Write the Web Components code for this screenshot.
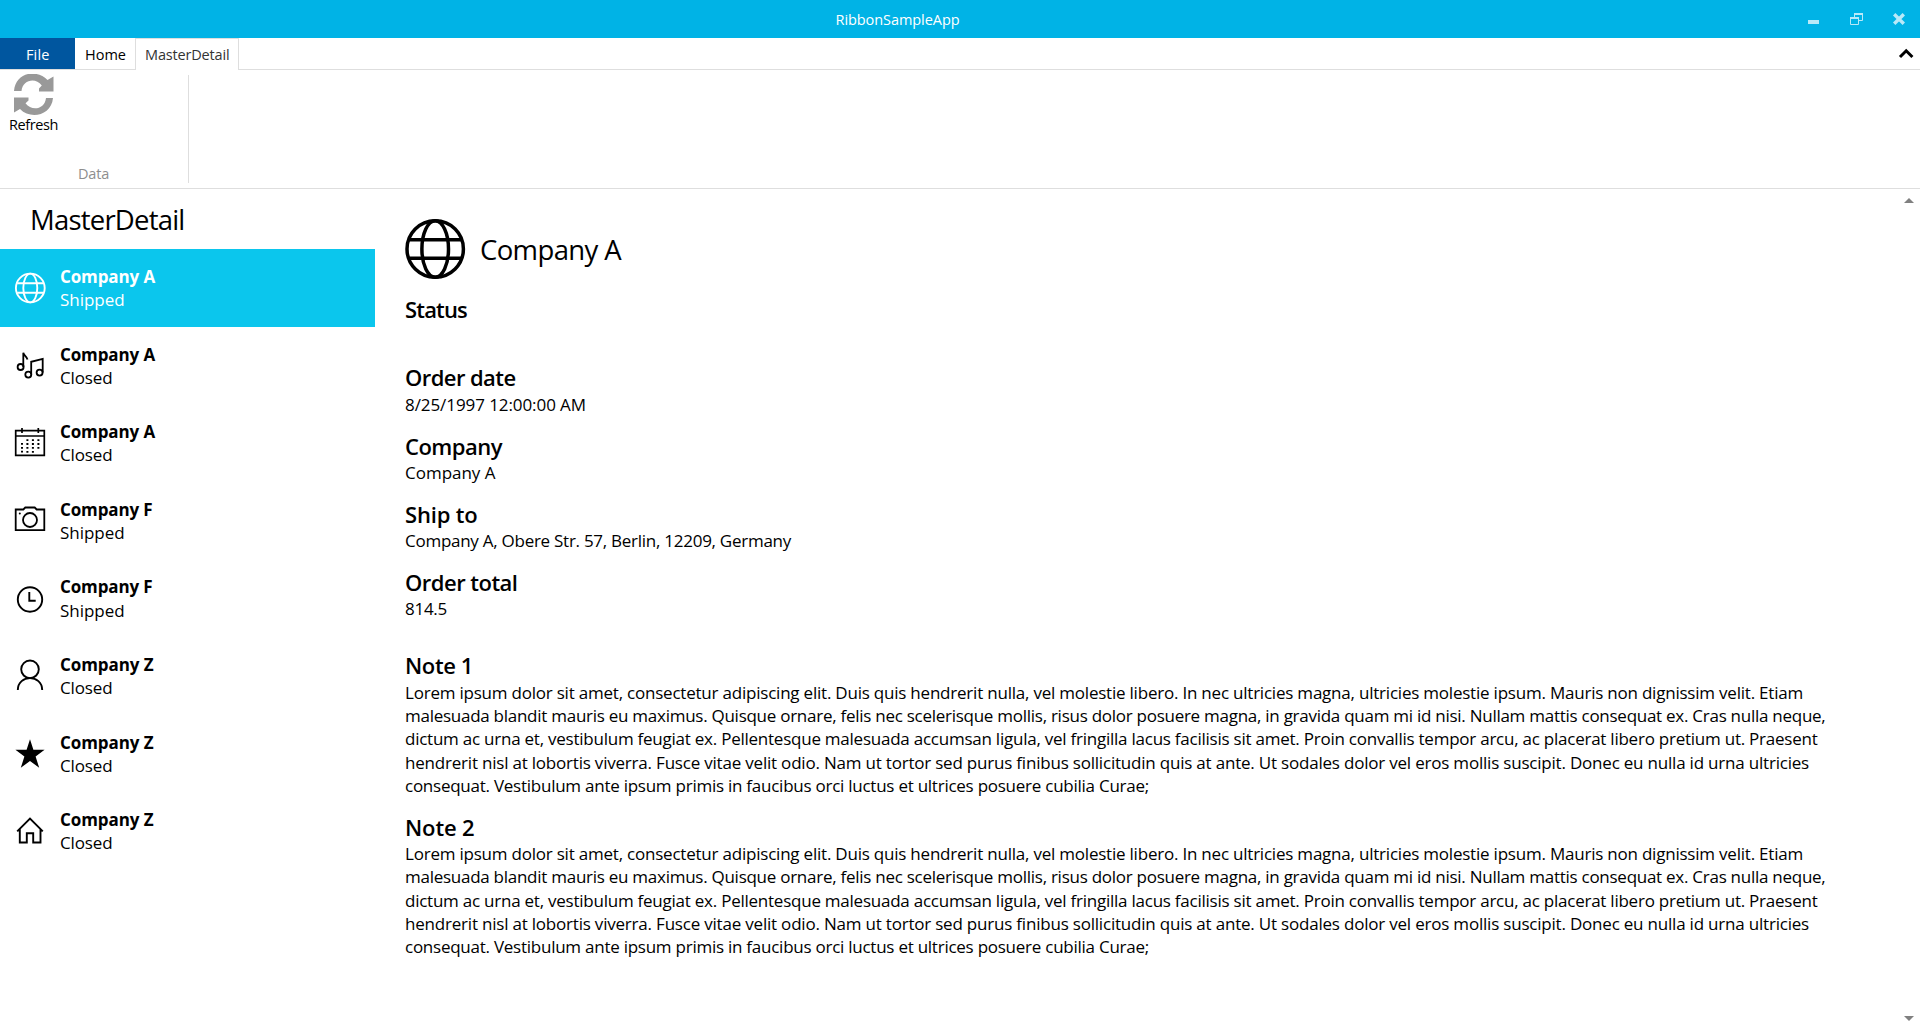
<!DOCTYPE html>
<html lang="en">
<head>
<meta charset="utf-8">
<title>RibbonSampleApp</title>
<style>
html,body{margin:0;height:100%;background:#fff;overflow:hidden}
body{font-family:"Open Sans","Noto Sans",sans-serif;font-size:17px;color:#000}
</style>
</head>
<body>
<app-window></app-window>
<script>
const define = (name, html, init) => customElements.define(name, class extends HTMLElement {
  constructor() {
    super();
    this.attachShadow({mode: 'open'}).innerHTML = html;
  }
  connectedCallback() { if (init) init(this, this.shadowRoot); }
});

// One line of text, tracked so that it fills the width given in "w".
customElements.define('fit-text', class extends HTMLElement {
  constructor() {
    super();
    this.attachShadow({mode: 'open'}).innerHTML =
      '<style>:host{display:block;white-space:pre;line-height:23.27px}span{display:inline-block;line-height:inherit;vertical-align:top}</style><span></span>';
  }
  connectedCallback() {
    const s = this.shadowRoot.querySelector('span');
    s.textContent = this.getAttribute('t');
    const w = parseFloat(this.getAttribute('w'));
    const n = s.textContent.length;
    s.style.letterSpacing = '0px';
    s.style.letterSpacing = ((w - s.getBoundingClientRect().width) / n) + 'px';
  }
});

const ICONS = {
  globe: '<circle cx="30.3" cy="39" r="14.4"/><ellipse cx="30.3" cy="39" rx="7" ry="14.4"/><path d="M17.2 34.3h26.2M17.2 43.7h26.2"/>',
  music: '<g stroke-width="1.8"><circle cx="20.6" cy="40" r="3"/><path d="M23.3 40V25.7c.5 3 3.4 3.2 4.2 6.8"/><circle cx="28.3" cy="47.6" r="3"/><circle cx="39.6" cy="45.6" r="3"/><path d="M31.200 47.6V34.8L42.7 32v13.6"/></g>',
  calendar: '<g stroke-width="1.7"><path d="M15.7 26.7h28.6v24.6H15.7zM15.7 32h28.6M22 24v5M38.3 24v5"/><path stroke-width="2" stroke-dasharray="1.8 2.1" d="M22 39v10.6M27.4 35.2v14.4M32.9 35.2v14.4M38.4 35.2v10.6"/></g>',
  camera: '<g stroke-width="1.8"><path d="M15.7 27.5h7.6l2-2h9.4l2 2h7.6v20.7H15.7z"/><circle cx="30" cy="38" r="7"/></g><circle cx="19.8" cy="31.5" r="1" fill="currentColor" stroke="none"/>',
  clock: '<circle cx="30" cy="40.5" r="12.2"/><path d="M29.3 33v8.7h6.4"/>',
  person: '<circle cx="30" cy="32.3" r="8.8"/><path d="M17.8 53c0-15.8 24.4-15.8 24.4 0"/>',
  star: '<path fill="currentColor" stroke="none" d="M30 24.3l3.4 10.4h11.2l-9 6.9 3.6 11.2L30 46l-9.2 6.8 3.6-11.2-9-6.9h11.2z"/>',
  house: '<path d="M17.2 39.3L30 26.5l12.8 12.8M19.8 37v13.5h7V41.3h6.4v9.2h7.3V37"/>'
};

define('title-bar', `<style>
:host{display:flex;height:38px;background:#00b3e6;color:#fff;font-size:14.500px}
fit-text{padding:8px 0 0 835.500px}
.b{display:flex;flex:1;justify-content:flex-end}
</style>
<fit-text t="RibbonSampleApp" w="124"></fit-text>
<div class="b"><svg width="128" height="38" fill="none" stroke="#b9e9f8"><path stroke="none" fill="#b9e9f8" d="M16 20h11v4H16z"/><path d="M62.5 17.5V15M62.5 14v3.5M66.5 20.5h4v-6.5M62 14h9" stroke-width="1"/><path stroke-width="2" d="M62 14h9M58 18h9"/><path d="M58.5 17v7.500h8V17"/><path stroke-width="3.400" d="M102.200 14.200l9.600 9.600M111.800 14.200l-9.600 9.600"/></svg></div>`);

define('ribbon-tabs', `<style>
:host{display:flex;height:32px;font-size:14.500px}
div{box-sizing:border-box;height:32px;border-bottom:1px solid #dedede;padding-top:5px}
.f{width:75px;background:linear-gradient(#00569f,#00569f) content-box;color:#fff;padding:0}
.f fit-text{padding:5px 0 3px 26px}
.h{width:60px;padding-left:10px}
.m{width:104px;border:1px solid #dedede;border-bottom:0;padding:4px 0 0 9px;color:#333}
.r{flex:1;display:flex;justify-content:flex-end;padding:0}
</style>
<div class="f"><fit-text t="File" w="23.500"></fit-text></div>
<div class="h"><fit-text t="Home" w="41"></fit-text></div>
<div class="m"><fit-text t="MasterDetail" w="84.500"></fit-text></div>
<div class="r"><svg width="30" height="30" fill="none" stroke="#000" stroke-width="3"><path d="M10 19l6.200-6.200 6.200 6.200"/></svg></div>`);

define('ribbon-group', `<style>
:host{display:flex;height:118px;border-bottom:1px solid #dedede;font-size:14.500px}
section{display:flex;flex-direction:column;justify-content:space-between;width:188px;height:108px;margin-top:5px;border-right:1px solid #dedede}
svg{display:block;margin:-1px 0 0 13px}
.b fit-text{margin:-3px 0 0 9px}
.l{color:#8e8e8e;margin:0 0 -2px 78px}
</style>
<section><div class="b"><svg width="42" height="42" viewBox="0 0.500 42 42" fill="#999"><path d="M1 17.500C2.500-1 23-5 34.500 6.500L40.500 3V18H26v-3l2.800-3C22 3 9.500 7 8.500 17.500z"/><path d="M40 24.500C38.500 42 17.500 46.500 7 35.500L1 39V24h14.500v3l-3 2.800C19 38.500 32 35.500 33 24.500z"/></svg>
<fit-text t="Refresh" w="49"></fit-text></div><fit-text class="l" t="Data" w="31"></fit-text></section>`);

define('order-item', `<style>
:host{display:flex;height:77.6px}
:host([selected]){background:#0bc6ed;color:#fff}
svg{width:60px;height:77.6px;flex:none}
.t{padding-top:16px}
.n{font-weight:700}
</style><svg viewBox="0 0 60 77.6" fill="none" stroke="currentColor" stroke-width="1.900"></svg><div class="t"></div>`, (h, r) => {
  r.querySelector('svg').innerHTML = ICONS[h.getAttribute('icon')];
  const n = h.getAttribute('name'), s = h.getAttribute('status');
  const nw = {A: 95, F: 92.500, Z: 93.500}[n.slice(-1)], sw = s === 'Shipped' ? 64.500 : 52.500;
  r.querySelector('.t').innerHTML = `<fit-text class="n" t="${n}" w="${nw}"></fit-text><fit-text t="${s}" w="${sw}"></fit-text>`;
});

define('master-list', `<style>
:host{display:block;width:375px;flex:none}
.h{font-size:27.500px;line-height:40px;padding:11px 0 9px 30px}
</style><fit-text class="h" t="MasterDetail" w="154.500"></fit-text>
<order-item selected icon="globe" name="Company A" status="Shipped"></order-item>
<order-item icon="music" name="Company A" status="Closed"></order-item>
<order-item icon="calendar" name="Company A" status="Closed"></order-item>
<order-item icon="camera" name="Company F" status="Shipped"></order-item>
<order-item icon="clock" name="Company F" status="Shipped"></order-item>
<order-item icon="person" name="Company Z" status="Closed"></order-item>
<order-item icon="star" name="Company Z" status="Closed"></order-item>
<order-item icon="house" name="Company Z" status="Closed"></order-item>`);

define('detail-field', `<style>
:host{display:block;margin-bottom:15px}
.h{font-size:22px;line-height:30px;font-weight:600}
.v{min-height:23.27px;padding-top:.4px;margin-bottom:-.4px}
</style><fit-text class="h"></fit-text><div class="v"><slot></slot></div>`, (h, r) => {
  const l = r.querySelector('.h');
  l.setAttribute('t', h.getAttribute('label'));
  l.setAttribute('w', h.getAttribute('lw'));
  l.connectedCallback();
});

define('note-text', `<style>:host{display:block}</style>
<fit-text t="Lorem ipsum dolor sit amet, consectetur adipiscing elit. Duis quis hendrerit nulla, vel molestie libero. In nec ultricies magna, ultricies molestie ipsum. Mauris non dignissim velit. Etiam" w="1398"></fit-text>
<fit-text t="malesuada blandit mauris eu maximus. Quisque ornare, felis nec scelerisque mollis, risus dolor posuere magna, in gravida quam mi id nisi. Nullam mattis consequat ex. Cras nulla neque," w="1420.500"></fit-text>
<fit-text t="dictum ac urna et, vestibulum feugiat ex. Pellentesque malesuada accumsan ligula, vel fringilla lacus facilisis sit amet. Proin convallis tempor arcu, ac placerat libero pretium ut. Praesent" w="1412.500"></fit-text>
<fit-text t="hendrerit nisl at lobortis viverra. Fusce vitae velit odio. Nam ut tortor sed purus finibus sollicitudin quis at ante. Ut sodales dolor vel eros mollis suscipit. Donec eu nulla id urna ultricies" w="1404"></fit-text>
<fit-text t="consequat. Vestibulum ante ipsum primis in faucibus orci luctus et ultrices posuere cubilia Curae;" w="744"></fit-text>`);

define('order-detail', `<style>
:host{display:block;flex:1;padding:30px 0 0 30px}
header{display:flex;height:60px;margin-bottom:15px}
header fit-text{font-size:27.500px;line-height:40px;padding:11px 0 0 14.500px}
.last{margin-bottom:30px}
</style>
<header><svg width="60.500" height="60" viewBox="0 0 60.500 60" fill="none" stroke="#000" stroke-width="3.500"><circle cx="30.200" cy="30" r="28.200"/><ellipse cx="30.200" cy="30" rx="13.300" ry="28.200"/><path d="M4.200 20.700h52M4.200 39.300h52"/></svg><fit-text t="Company A" w="141"></fit-text></header>
<detail-field label="Status" lw="62"></detail-field>
<detail-field label="Order date" lw="110.500"><fit-text t="8/25/1997 12:00:00 AM" w="181"></fit-text></detail-field>
<detail-field label="Company" lw="97"><fit-text t="Company A" w="90.500"></fit-text></detail-field>
<detail-field label="Ship to" lw="72.500"><fit-text t="Company A, Obere Str. 57, Berlin, 12209, Germany" w="386"></fit-text></detail-field>
<detail-field class="last" label="Order total" lw="112.500"><fit-text t="814.5" w="42"></fit-text></detail-field>
<detail-field label="Note 1" lw="68"><note-text></note-text></detail-field>
<detail-field label="Note 2" lw="69.500"><note-text></note-text></detail-field>`);

define('scroll-rail', `<style>
:host{display:flex;flex-direction:column;justify-content:space-between;width:16px;flex:none;padding:9px 0 9px}
svg{display:block}
</style><svg width="12" height="5" fill="#808080"><path d="M0 5L5 0l5 5z"/></svg><svg width="12" height="5" fill="#808080"><path d="M0 0h10L5 5z"/></svg>`);

define('app-window', `<style>
:host{display:flex;flex-direction:column;height:1030px}
main{display:flex;flex:1}
</style><title-bar></title-bar><ribbon-tabs></ribbon-tabs><ribbon-group></ribbon-group>
<main><master-list></master-list><order-detail></order-detail><scroll-rail></scroll-rail></main>`);
</script>
</body>
</html>
